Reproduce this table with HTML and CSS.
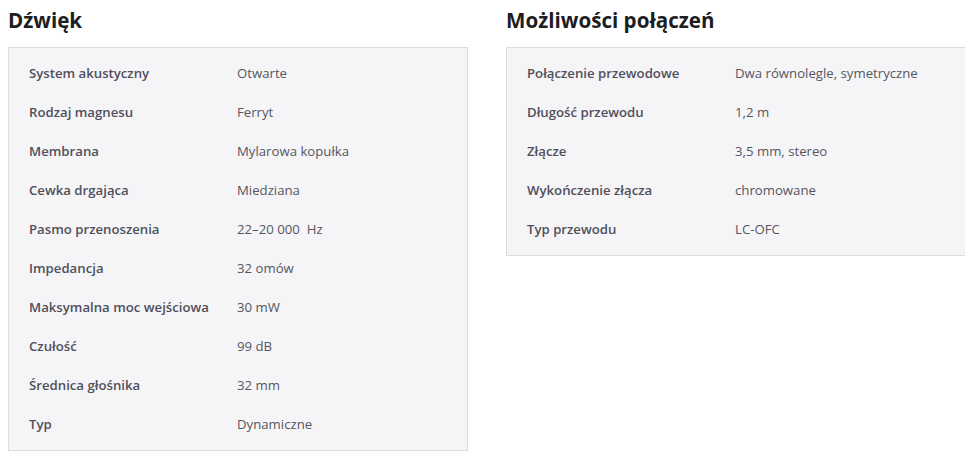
FILE: index.html
```html
<!DOCTYPE html>
<html lang="pl">
<head>
<meta charset="utf-8">
<link rel="stylesheet" href="styles.css">
</head>
<body>
<div class="page">
  <section class="group">
    <h2 class="title">Dźwięk</h2>
    <div class="box">
      <div class="row"><span class="label">System akustyczny</span><span class="value">Otwarte</span></div>
      <div class="row"><span class="label">Rodzaj magnesu</span><span class="value">Ferryt</span></div>
      <div class="row"><span class="label">Membrana</span><span class="value">Mylarowa kopułka</span></div>
      <div class="row"><span class="label">Cewka drgająca</span><span class="value">Miedziana</span></div>
      <div class="row"><span class="label">Pasmo przenoszenia</span><span class="value">22–20 000&nbsp; Hz</span></div>
      <div class="row"><span class="label">Impedancja</span><span class="value">32 omów</span></div>
      <div class="row"><span class="label">Maksymalna moc wejściowa</span><span class="value">30 mW</span></div>
      <div class="row"><span class="label">Czułość</span><span class="value">99 dB</span></div>
      <div class="row"><span class="label">Średnica głośnika</span><span class="value">32 mm</span></div>
      <div class="row"><span class="label">Typ</span><span class="value">Dynamiczne</span></div>
    </div>
  </section>
  <section class="group">
    <h2 class="title">Możliwości połączeń</h2>
    <div class="box">
      <div class="row"><span class="label">Połączenie przewodowe</span><span class="value">Dwa równolegle, symetryczne</span></div>
      <div class="row"><span class="label">Długość przewodu</span><span class="value">1,2 m</span></div>
      <div class="row"><span class="label">Złącze</span><span class="value">3,5 mm, stereo</span></div>
      <div class="row"><span class="label">Wykończenie złącza</span><span class="value">chromowane</span></div>
      <div class="row"><span class="label">Typ przewodu</span><span class="value">LC-OFC</span></div>
    </div>
  </section>
</div>
</body>
</html>
```
FILE: styles.css
```css
html, body {
  margin: 0;
  padding: 0;
  background: #ffffff;
  overflow: hidden;
}
body {
  font-family: "Open Sans", "Liberation Sans", sans-serif;
}
.page {
  display: flex;
  align-items: flex-start;
  gap: 38px;
  padding: 8px 0 0 8px;
  width: 1000px;
}
.group {
  width: 460px;
  flex: none;
}
.title {
  margin: 0 0 15px 0;
  font-size: 20.6px;
  line-height: 24px;
  font-weight: 700;
  color: #1d1d22;
}
.box {
  background: #f5f5f7;
  border: 1px solid #dcdcdf;
  padding: 5px 0 7px;
}
.row {
  display: flex;
  height: 39px;
  align-items: center;
  font-size: 13.2px;
}
.label {
  width: 208px;
  padding-left: 20px;
  flex: none;
  font-weight: 600;
  color: #50505c;
}
.value {
  color: #55555f;
}
```
